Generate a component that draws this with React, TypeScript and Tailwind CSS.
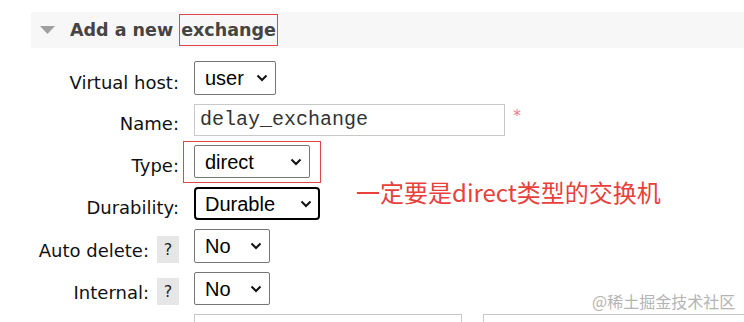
import React from "react";

const Chevron = () => (
  <svg width="12" height="8" viewBox="0 0 12 8" fill="none" stroke="#111" strokeWidth="2">
    <path d="M1.5 1.5 L6 6 L10.5 1.5" />
  </svg>
);

function Select({ w, value, focused }: { w: string; value: string; focused?: boolean }) {
  return (
    <div
      className={`${w} h-full flex items-center justify-between bg-white ${
        focused
          ? "border-2 border-black rounded-[4px] pl-[9px] pr-[6px]"
          : "border border-[#767676] rounded-[2px] pl-[10px] pr-[7px]"
      }`}
    >
      <span className="text-[20px] leading-none text-black font-['Liberation_Sans',Arial,sans-serif]">{value}</span>
      <Chevron />
    </div>
  );
}

function Help() {
  return (
    <span className="w-[22px] h-[27px] bg-[#e6e6e6] flex items-center justify-center text-[16px] text-[#222] ml-[8px] self-end">
      ?
    </span>
  );
}

function Row({
  label,
  help,
  h,
  children,
}: {
  label: string;
  help?: boolean;
  h: string;
  children: React.ReactNode;
}) {
  return (
    <div className={`flex ${h}`}>
      <div className="w-[180px] shrink-0 flex justify-end items-end pr-[1px]">
        <span className="text-[18px] leading-[22px] text-[#111] mb-[1px]">{label}</span>
        {help && <Help />}
      </div>
      <div className="ml-[14px] flex items-stretch">{children}</div>
    </div>
  );
}

export default function App() {
  return (
    <div className="relative w-[744px] h-[322px] overflow-hidden bg-white font-['DejaVu_Sans',Verdana,sans-serif]">
      {/* section header */}
      <div className="ml-[31px] mt-[12px] h-[36px] bg-[#f7f7f7] flex items-center">
        <svg width="15" height="8" viewBox="0 0 15 8" className="ml-[9px]">
          <polygon points="0,0 15,0 7.5,8" fill="#a0a0a0" />
        </svg>
        <h2 className="ml-[15px] text-[17.5px] font-bold text-[#444] flex items-center">
          Add a new&nbsp;
          <span className="inline-block h-[32px] leading-[30px] px-[1px] border border-[#e0474c]">exchange</span>
        </h2>
      </div>

      {/* form */}
      <div className="mt-[13px] flex flex-col gap-[9px]">
        <Row label="Virtual host:" h="h-[34px]">
          <Select w="w-[82px]" value="user" />
        </Row>
        <Row label="Name:" h="h-[32px]">
          <div className="w-[311px] h-full border border-[#c8c8c8] flex items-center pl-[5px]">
            <span className="text-[20px] text-[#333] font-['Liberation_Mono','Courier_New',monospace]">
              delay_exchange
            </span>
          </div>
          <span className="ml-[8px] mt-[4px] text-[16px] leading-none text-[#f07a8a]">*</span>
        </Row>
        <Row label="Type:" h="h-[33px]">
          <div className="relative h-full">
            <Select w="w-[116px]" value="direct" />
            <div className="absolute -left-[11px] -top-[4px] w-[138px] h-[42px] border border-[#e0474c]" />
          </div>
        </Row>
        <Row label="Durability:" h="h-[33px]">
          <Select w="w-[126px]" value="Durable" focused />
        </Row>
        <Row label="Auto delete:" help h="h-[34px]">
          <Select w="w-[76px]" value="No" />
        </Row>
        <Row label="Internal:" help h="h-[33px]">
          <Select w="w-[76px]" value="No" />
        </Row>
        <div className="flex h-[40px] ml-[194px]">
          <div className="w-[268px] shrink-0 border border-[#c8c8c8]" />
          <div className="ml-[21px] w-[300px] shrink-0 border border-[#c8c8c8]" />
        </div>
      </div>

      {/* annotation */}
      <p className="absolute left-[356px] top-[178px] text-[24px] leading-[28px] text-[#e8403a] font-['Noto_Sans_CJK_SC','Noto_Sans',sans-serif] whitespace-nowrap">
        一定要是direct类型的交换机
      </p>

      {/* watermark */}
      <p className="absolute left-[592px] top-[290px] text-[16px] leading-[22px] text-[#b4b4b4] font-['Noto_Sans_CJK_SC','Noto_Sans',sans-serif] whitespace-nowrap">
        @稀土掘金技术社区
      </p>
    </div>
  );
}
